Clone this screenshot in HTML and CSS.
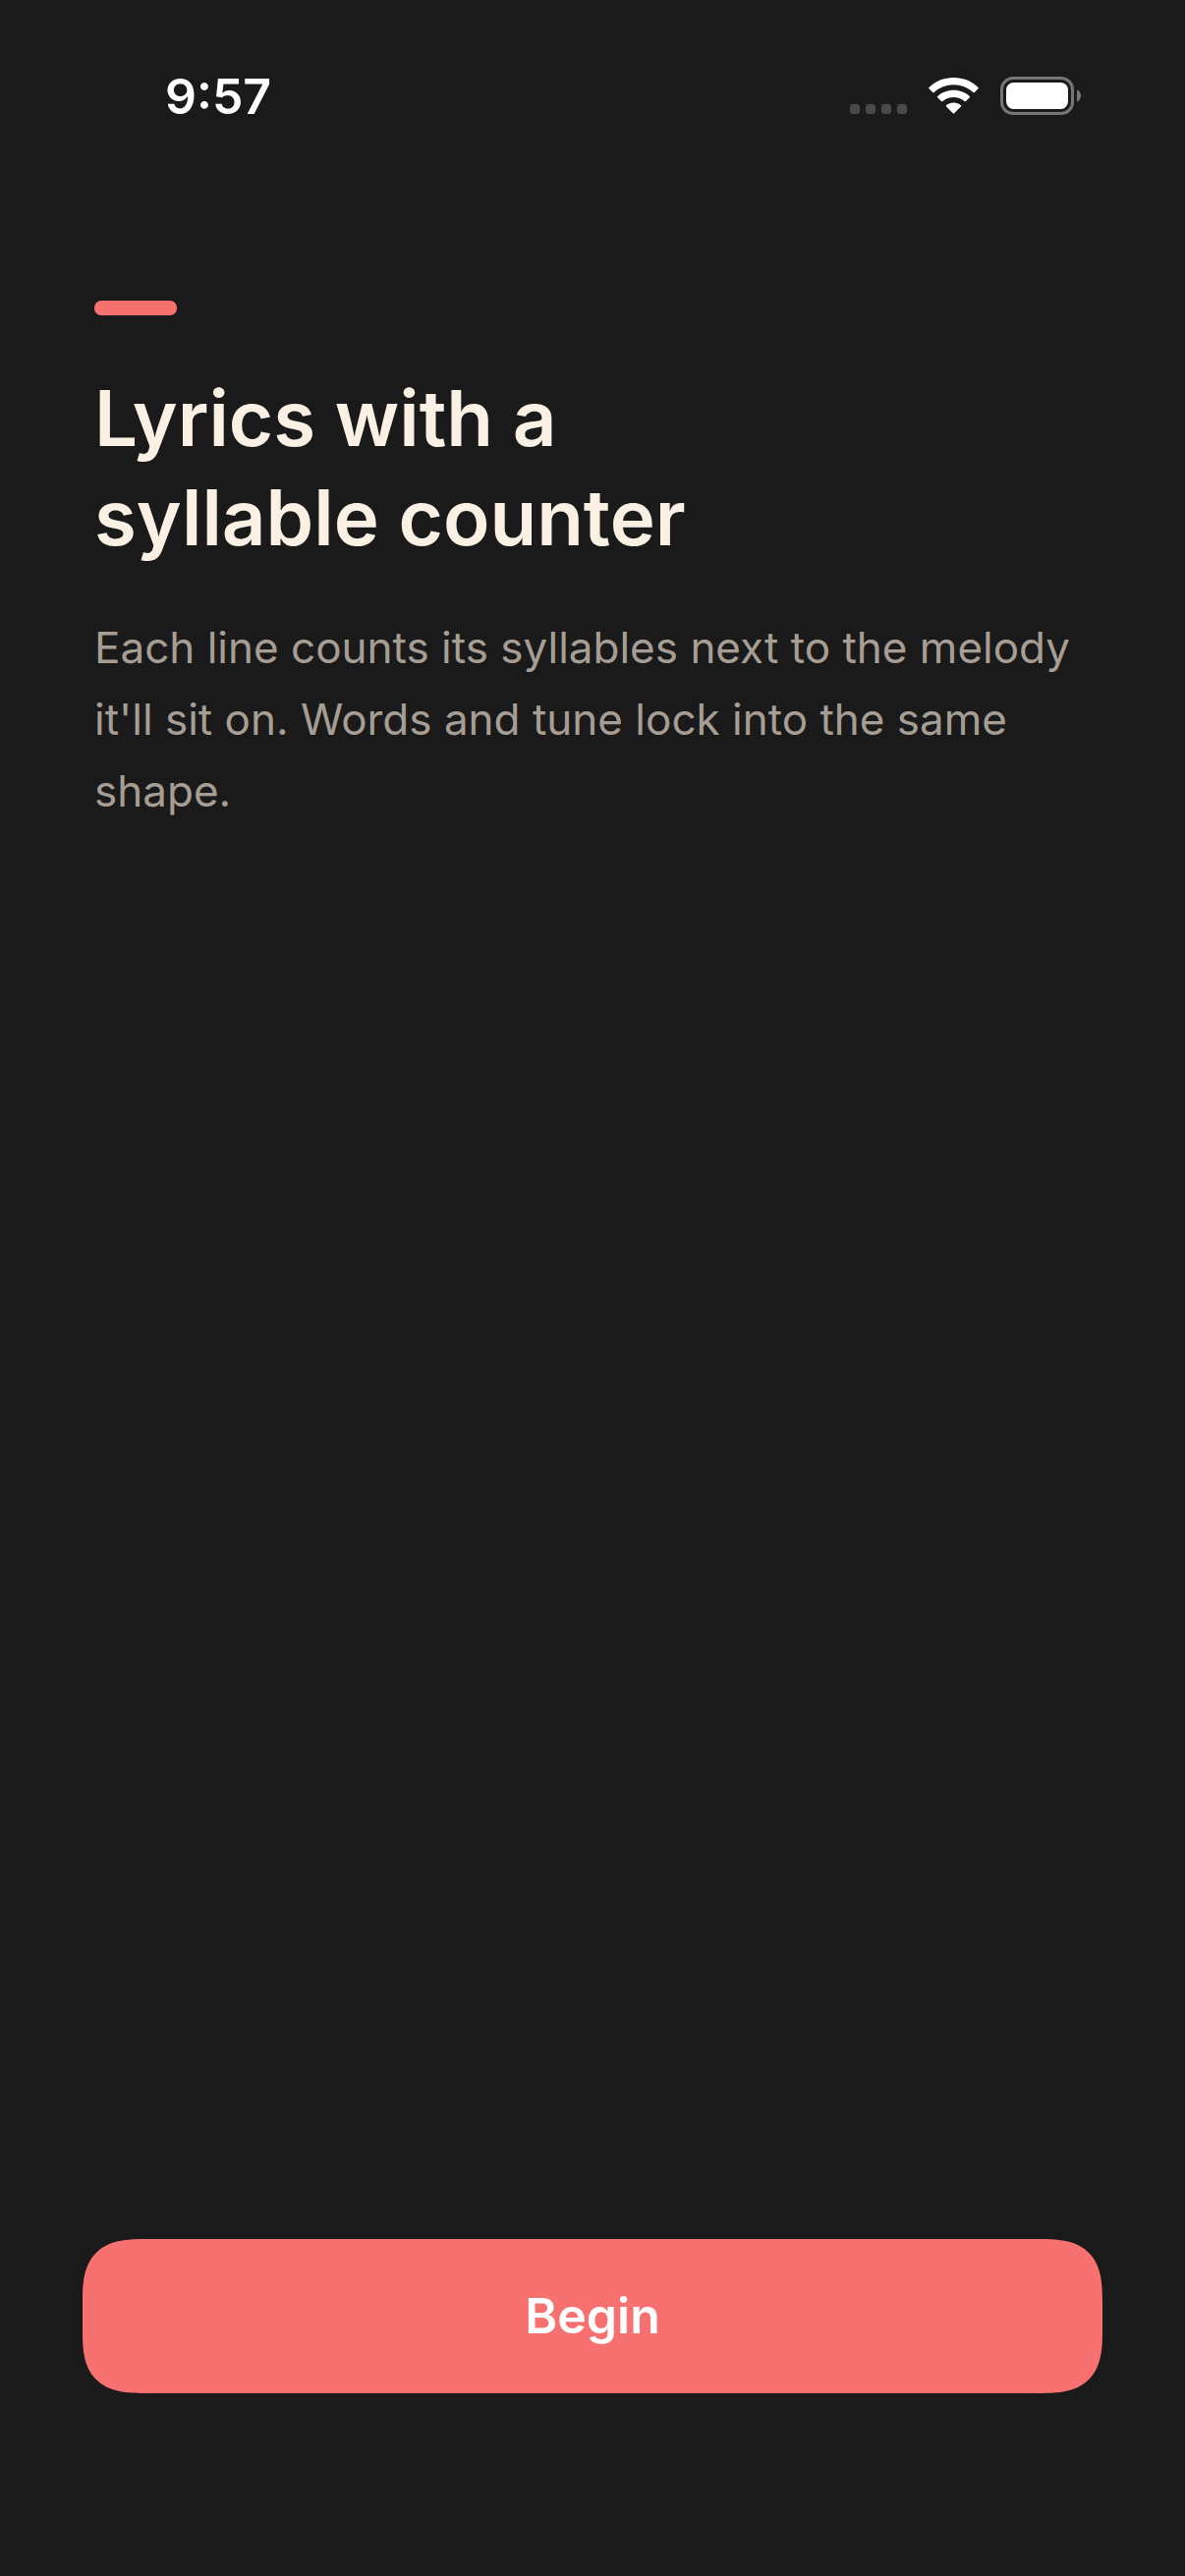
FILE: index.html
```html
<!DOCTYPE html>
<html lang="en">
<head>
  <meta charset="UTF-8" />
  <meta name="viewport" content="width=device-width, initial-scale=1" />
  <title>Lyrics with a syllable counter</title>
  <link rel="stylesheet" href="styles.css">
</head>
<body>
  <header class="status-bar">
    <span class="time">9:57</span>
    <div class="status-icons">
      <svg class="signal" viewBox="0 0 58 11" width="58" height="11" aria-hidden="true">
        <rect x="0" width="10" height="10" rx="3" />
        <rect x="16" width="10" height="10" rx="3" />
        <rect x="32" width="10" height="10" rx="3" />
        <rect x="48" width="10" height="10" rx="3" />
      </svg>
      <svg class="wifi" viewBox="0 0 51 38" width="51" height="38" aria-hidden="true">
        <path d="M25.500 0C35.200 0 44.200 3.700 50.500 9.900Q51.200 10.600 50.500 11.300L46.800 15Q46.100 15.700 45.400 15C40 10.100 33 7.200 25.500 7.200S11 10.100 5.600 15Q4.900 15.700 4.200 15L0.500 11.300Q-0.200 10.600 0.500 9.900C6.800 3.700 15.800 0 25.500 0Z" />
        <path d="M25.500 12.700C31.800 12.700 37.500 15 41.800 18.900Q42.500 19.600 41.800 20.300L38 24Q37.300 24.700 36.500 24C33.500 21.500 29.700 20 25.500 20S17.500 21.500 14.500 24Q13.700 24.700 13 24L9.200 20.300Q8.500 19.600 9.200 18.900C13.500 15 19.200 12.700 25.500 12.700Z" />
        <path d="M25.500 25.400C28.300 25.400 30.900 26.400 32.900 28Q33.600 28.700 32.900 29.400L26.200 36.200Q25.500 36.900 24.800 36.200L18.100 29.400Q17.400 28.700 18.100 28C20.100 26.400 22.700 25.400 25.500 25.400Z" />
      </svg>
      <svg class="battery" viewBox="0 0 82 39" width="82" height="39" aria-hidden="true">
        <rect class="battery-shell" x="1.500" y="1.500" width="72" height="36" rx="11.500" />
        <rect class="battery-level" x="6" y="6" width="63" height="27" rx="7.500" />
        <path class="battery-tip" d="M78 13.200C80.500 14.200 82 16.700 82 19.500S80.500 24.800 78 25.800Z" />
      </svg>
    </div>
  </header>

  <main class="intro">
    <div class="accent"></div>
    <h1>Lyrics with a<br>syllable counter</h1>
    <p>Each line counts its syllables next to the melody it'll sit on. Words and tune lock into the same shape.</p>
  </main>

  <footer class="actions">
    <button type="button" class="begin">Begin</button>
  </footer>
</body>
</html>
```

FILE: styles.css
```css
* {
  box-sizing: border-box;
}

body {
  background: #1a1a1a;
  color: #fff;
  font-family: Inter, 'Liberation Sans', sans-serif;
  margin: 0;
  min-height: 100vh;
  display: flex;
  flex-direction: column;
}

.status-bar {
  display: flex;
  justify-content: space-between;
  align-items: flex-start;
  padding: 68px 106px 0 168px;
}

.time {
  font-size: 50px;
  font-weight: 600;
  line-height: 60px;
}

.status-icons {
  display: flex;
  align-items: flex-end;
  gap: 22px;
  padding-top: 10px;
}

.signal {
  fill: #4a4a4a;
}

.wifi,
.battery-level {
  fill: #fff;
}

.battery-shell {
  fill: none;
  stroke: #767676;
  stroke-width: 3px;
}

.battery-tip {
  fill: #767676;
}

.intro {
  flex: 1;
  padding: 178px 96px 0;
}

.accent {
  width: 84px;
  height: 15px;
  border-radius: 7px;
  background: #f87171;
}

h1 {
  margin: 54px 0 0;
  color: #faf0e4;
  font-size: 78px;
  font-weight: 600;
  line-height: 101px;
}

p {
  margin: 46px 0 0;
  color: #a69e94;
  font-size: 44px;
  line-height: 73px;
}

.actions {
  padding: 0 84px 186px;
}

.begin {
  display: block;
  width: 100%;
  padding: 48px;
  border: none;
  border-radius: 64px;
  corner-shape: superellipse(1.5);
  background: #f87171;
  color: #fff;
  font-family: inherit;
  font-size: 50px;
  font-weight: 600;
  line-height: 61px;
  cursor: pointer;
}
```
